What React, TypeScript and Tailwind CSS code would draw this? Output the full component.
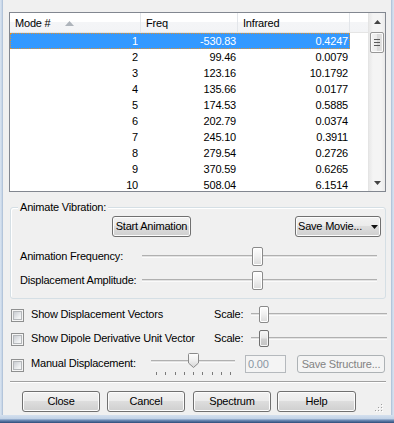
import React from "react";

const rows: [string, string, string][] = [
  ["1", "-530.83", "0.4247"],
  ["2", "99.46", "0.0079"],
  ["3", "123.16", "10.1792"],
  ["4", "135.66", "0.0177"],
  ["5", "174.53", "0.5885"],
  ["6", "202.79", "0.0374"],
  ["7", "245.10", "0.3911"],
  ["8", "279.54", "0.2726"],
  ["9", "370.59", "0.6265"],
  ["10", "508.04", "6.1514"],
];

function WinButton({ children, className = "" }: { children: React.ReactNode; className?: string }) {
  return (
    <div
      className={
        "flex items-center justify-center rounded-[3px] border border-[#707070] bg-[linear-gradient(#f2f2f2,#ebebeb_45%,#dddddd_50%,#cfcfcf)] shadow-[inset_0_0_0_1px_#fcfcfc] leading-[13px] whitespace-nowrap " +
        className
      }
    >
      {children}
    </div>
  );
}

function Checkbox() {
  return (
    <div className="w-[13px] h-[13px] border border-[#8e8f8f] bg-[#f5f5f5] p-[1px] flex">
      <div className="flex-1 border border-[#b4b7ba] bg-[linear-gradient(135deg,#c9ccd1,#eef0f2_70%,#f7f7f7)]" />
    </div>
  );
}

function Ticks() {
  return (
    <div className="absolute left-[5px] top-[21px] w-[75px] h-[3px] flex justify-between">
      {Array.from({ length: 9 }).map((_, i) => (
        <div key={i} className="w-px h-[3px] bg-[#7a7a7a]" />
      ))}
    </div>
  );
}

export default function App() {
  return (
    <div className="w-[394px] h-[423px] flex flex-col font-['Liberation_Sans',Arial,sans-serif] text-[11px] tracking-[-0.2px] text-black overflow-hidden">
      <div className="flex-1 flex min-h-0">
        <div className="w-[3px] bg-[linear-gradient(90deg,#dbe5f1,#c6d5e7_60%,#a7bad2)]" />
        <div className="flex-1 bg-[#f0f0f0] flex flex-col">
          {/* List view */}
          <div className="mt-[12px] ml-[6px] w-[377px] h-[180px] border border-[#828790] bg-white flex overflow-hidden shrink-0">
            <div className="w-[358px] flex flex-col">
              <div className="h-[20px] shrink-0 flex border-b border-[#e5e5e5] bg-[linear-gradient(#ffffff,#ffffff_45%,#f4f5f7_50%,#f3f4f6)] leading-[13px]">
                <div className="w-[131px] border-r border-[#e3e6ea] pl-[5px] pt-[1px] flex items-center">
                  <span className="w-[50px]">Mode #</span>
                  <svg width="9" height="5" viewBox="0 0 9 5">
                    <path d="M0 5 L4.5 0 L9 5 Z" fill="#aeb4bb" />
                  </svg>
                </div>
                <div className="w-[97px] border-r border-[#e3e6ea] pl-[5px] pt-[1px] flex items-center">Freq</div>
                <div className="w-[112px] border-r border-[#e3e6ea] pl-[5px] pt-[1px] flex items-center">Infrared</div>
                <div className="flex-1" />
              </div>
              {rows.map((r, i) => (
                <div key={i} className="h-[16px] shrink-0 flex leading-[16px]">
                  <div
                    className={
                      i === 0
                        ? "w-[340px] flex bg-[#3399ff] text-white outline-1 outline-dotted outline-[#e0912f] -outline-offset-1"
                        : "w-[340px] flex"
                    }
                  >
                    <div className="w-[131px] text-right pr-[3px]">{r[0]}</div>
                    <div className="w-[97px] text-right pr-[2px]">{r[1]}</div>
                    <div className="w-[112px] text-right pr-[2px]">{r[2]}</div>
                  </div>
                </div>
              ))}
            </div>
            {/* Scrollbar */}
            <div className="w-[17px] flex flex-col border-l border-[#e4e4e4] bg-[linear-gradient(90deg,#e8e8e8,#f4f4f4_25%,#f4f4f4_75%,#eaeaea)]">
              <div className="h-[17px] flex items-center justify-center">
                <svg width="7" height="4" viewBox="0 0 7 4">
                  <path d="M0 4 L3.5 0 L7 4 Z" fill="#444" />
                </svg>
              </div>
              <div className="mt-[2px] ml-[1px] w-[14px] h-[21px] rounded-[2px] border border-[#979797] bg-[linear-gradient(90deg,#f4f4f4,#ebebeb_50%,#d9d9d9_51%,#e2e2e2)] shadow-[inset_0_0_0_1px_#fbfbfb] flex flex-col items-center justify-center gap-[2px]">
                <div className="w-[6px] h-px bg-[#5a5a5a]" />
                <div className="w-[6px] h-px bg-[#5a5a5a]" />
                <div className="w-[6px] h-px bg-[#5a5a5a]" />
              </div>
              <div className="mt-auto h-[17px] flex items-center justify-center">
                <svg width="7" height="4" viewBox="0 0 7 4">
                  <path d="M0 0 L7 0 L3.5 4 Z" fill="#444" />
                </svg>
              </div>
            </div>
          </div>

          {/* Animate Vibration group */}
          <div className="relative mt-[15px] ml-[7px] w-[376px] h-[92px] shrink-0 border border-[#d5dfe5] rounded-[3px] shadow-[inset_1px_1px_0_#ffffff] flex flex-col">
            <span className="absolute left-[7px] -top-[7px] px-[2px] bg-[#f0f0f0] leading-[13px] whitespace-nowrap">
              Animate Vibration:
            </span>
            <div className="mt-[8px] h-[21px] flex">
              <WinButton className="ml-[101px] w-[79px]">Start Animation</WinButton>
              <div className="ml-auto mr-[4px] w-[86px] flex items-center rounded-[3px] border border-[#707070] bg-[linear-gradient(#f2f2f2,#ebebeb_45%,#dddddd_50%,#cfcfcf)] shadow-[inset_0_0_0_1px_#fcfcfc] leading-[13px] pl-[2px] whitespace-nowrap">
                <span>Save Movie...</span>
                <svg className="ml-auto mr-[2px]" width="7" height="4" viewBox="0 0 7 4">
                  <path d="M0 0 L7 0 L3.5 4 Z" fill="#111" />
                </svg>
              </div>
            </div>
            <div className="mt-[10px] h-[19px] flex items-center">
              <div className="w-[131px] pl-[9px] leading-[13px] whitespace-nowrap">Animation Frequency:</div>
              <div className="relative w-[235px] h-[19px]">
                <div className="absolute left-0 right-0 top-[8px] h-[3px] border-t border-[#b0b0b0] border-b border-b-[#fafafa] bg-[#e2e2e2]" />
                <div className="absolute left-[110px] top-0 w-[11px] h-[19px] rounded-[2px] border border-[#8a8a8a] bg-[linear-gradient(#fefefe,#efefef_50%,#dadada)] shadow-[inset_0_0_0_1px_#ffffff]" />
              </div>
            </div>
            <div className="mt-[5px] h-[19px] flex items-center">
              <div className="w-[131px] pl-[9px] leading-[13px] whitespace-nowrap">Displacement Amplitude:</div>
              <div className="relative w-[235px] h-[19px]">
                <div className="absolute left-0 right-0 top-[8px] h-[3px] border-t border-[#b0b0b0] border-b border-b-[#fafafa] bg-[#e2e2e2]" />
                <div className="absolute left-[110px] top-0 w-[11px] h-[19px] rounded-[2px] border border-[#8a8a8a] bg-[linear-gradient(#fefefe,#efefef_50%,#dadada)] shadow-[inset_0_0_0_1px_#ffffff]" />
              </div>
            </div>
          </div>

          {/* Show Displacement Vectors */}
          <div className="mt-[4px] h-[24px] shrink-0 flex items-start">
            <div className="ml-[8px] w-[203px] flex items-start">
              <div className="mt-[6px]">
                <Checkbox />
              </div>
              <div className="ml-[7px] mt-[5px] leading-[13px] whitespace-nowrap">Show Displacement Vectors</div>
            </div>
            <div className="w-[37px] mt-[5px] leading-[13px]">Scale:</div>
            <div className="relative w-[136px] h-[17px] mt-[3px]">
              <div className="absolute left-0 right-0 top-[7px] h-[3px] border-t border-[#b0b0b0] border-b border-b-[#fafafa] bg-[#e2e2e2]" />
              <div className="absolute left-[8px] top-0 w-[10px] h-[17px] rounded-[2px] border border-[#8a8a8a] bg-[linear-gradient(#fefefe,#efefef_50%,#dadada)] shadow-[inset_0_0_0_1px_#ffffff]" />
            </div>
          </div>

          {/* Show Dipole Derivative Unit Vector */}
          <div className="h-[24px] shrink-0 flex items-start">
            <div className="ml-[8px] w-[203px] flex items-start">
              <div className="mt-[6px]">
                <Checkbox />
              </div>
              <div className="ml-[7px] mt-[5px] leading-[13px] whitespace-nowrap">Show Dipole Derivative Unit Vector</div>
            </div>
            <div className="w-[37px] mt-[5px] leading-[13px]">Scale:</div>
            <div className="relative w-[136px] h-[17px] mt-[3px]">
              <div className="absolute left-0 right-0 top-[7px] h-[3px] border-t border-[#b0b0b0] border-b border-b-[#fafafa] bg-[#e2e2e2]" />
              <div className="absolute left-[8px] top-0 w-[10px] h-[17px] rounded-[2px] border border-[#707070] bg-[linear-gradient(#f8f8f8,#e6e6e6_45%,#cfcfcf_55%,#c4c4c4)] shadow-[inset_0_0_0_1px_#f4f4f4]" />
            </div>
          </div>

          {/* Manual Displacement */}
          <div className="h-[27px] shrink-0 flex items-start">
            <div className="ml-[8px] w-[140px] flex items-start">
              <div className="mt-[8px]">
                <Checkbox />
              </div>
              <div className="ml-[7px] mt-[6px] leading-[13px] whitespace-nowrap">Manual Displacement:</div>
            </div>
            <div className="relative w-[84px] h-[27px]">
              <div className="absolute left-0 right-0 top-[9px] h-[3px] border-t border-[#b0b0b0] border-b border-b-[#fafafa] bg-[#e2e2e2]" />
              <svg className="absolute left-[37px] top-[2px]" width="11" height="15" viewBox="0 0 11 15">
                <defs>
                  <linearGradient id="thg" x1="0" y1="0" x2="0" y2="1">
                    <stop offset="0" stopColor="#fefefe" />
                    <stop offset="0.5" stopColor="#efefef" />
                    <stop offset="1" stopColor="#d6d6d6" />
                  </linearGradient>
                </defs>
                <path d="M1.5 0.5 H9.5 Q10.5 0.5 10.5 1.5 V10 L5.5 14.5 L0.5 10 V1.5 Q0.5 0.5 1.5 0.5 Z" fill="url(#thg)" stroke="#8a8a8a" />
              </svg>
              <Ticks />
            </div>
            <div className="ml-[10px] mt-[4px] w-[41px] h-[18px] border border-[#b5b9bd] bg-[#f4f4f4] pl-[2px] leading-[16px] text-[#8a96a3]">
              0.00
            </div>
            <div className="ml-[11px] mt-[4px] w-[88px] h-[18px] rounded-[3px] border border-[#adb2b5] bg-[#f4f4f4] flex items-center justify-center leading-[13px] text-[#838383] whitespace-nowrap">
              Save Structure...
            </div>
          </div>

          {/* Separator */}
          <div className="mt-[3px] ml-[7px] w-[376px] h-[2px] shrink-0 border-t border-[#a0a0a0] border-b border-b-white" />

          {/* Bottom buttons */}
          <div className="mt-[8px] h-[21px] shrink-0 flex">
            <WinButton className="ml-[19px] w-[78px]">Close</WinButton>
            <WinButton className="ml-[7px] w-[78px]">Cancel</WinButton>
            <WinButton className="ml-[8px] w-[78px]">Spectrum</WinButton>
            <WinButton className="ml-[6px] w-[79px]">Help</WinButton>
            <svg className="ml-auto mr-[8px] self-end" width="8" height="8" viewBox="0 0 8 8">
              <rect x="6" y="0" width="1" height="1" fill="#a0a0a0" />
              <rect x="7" y="1" width="1" height="1" fill="#ffffff" />
              <rect x="3" y="3" width="1" height="1" fill="#a0a0a0" />
              <rect x="6" y="3" width="1" height="1" fill="#a0a0a0" />
              <rect x="4" y="4" width="1" height="1" fill="#ffffff" />
              <rect x="7" y="4" width="1" height="1" fill="#ffffff" />
              <rect x="0" y="6" width="1" height="1" fill="#a0a0a0" />
              <rect x="3" y="6" width="1" height="1" fill="#a0a0a0" />
              <rect x="6" y="6" width="1" height="1" fill="#a0a0a0" />
              <rect x="1" y="7" width="1" height="1" fill="#ffffff" />
              <rect x="4" y="7" width="1" height="1" fill="#ffffff" />
              <rect x="7" y="7" width="1" height="1" fill="#ffffff" />
            </svg>
          </div>
        </div>
        <div className="w-[3px] bg-[linear-gradient(90deg,#a7bad2,#c6d5e7_40%,#dbe5f1)]" />
      </div>
      <div className="h-[8px] shrink-0 bg-[linear-gradient(#d4e0ee,#c3d3e7_45%,#6f8db7_65%,#2d4b79)]" />
    </div>
  );
}
